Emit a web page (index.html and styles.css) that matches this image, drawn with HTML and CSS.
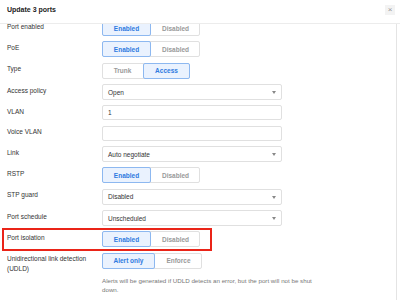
FILE: index.html
```html
<!DOCTYPE html>
<html lang="en">
<head>
    <meta charset="UTF-8">
    <meta name="viewport" content="width=device-width, initial-scale=1.0">
    <title>Update 3 ports</title>
    <link rel="stylesheet" href="styles.css">
</head>
<body>
    <div class="modal">
        <div class="modal-header">
            <span class="modal-title">Update 3 ports</span>
            <span class="close-btn">&times;</span>
        </div>
        <div class="modal-body">
            <div class="form">
                <div class="row">
                    <div class="label">Port enabled</div>
                    <div class="toggle">
                        <span class="seg wide active">Enabled</span>
                        <span class="seg wide">Disabled</span>
                    </div>
                </div>
                <div class="row">
                    <div class="label">PoE</div>
                    <div class="toggle">
                        <span class="seg wide active">Enabled</span>
                        <span class="seg wide">Disabled</span>
                    </div>
                </div>
                <div class="row">
                    <div class="label">Type</div>
                    <div class="toggle">
                        <span class="seg trunk">Trunk</span>
                        <span class="seg access active">Access</span>
                    </div>
                </div>
                <div class="row">
                    <div class="label">Access policy</div>
                    <div class="select">Open<span class="caret"></span></div>
                </div>
                <div class="row">
                    <div class="label">VLAN</div>
                    <div class="input">1</div>
                </div>
                <div class="row">
                    <div class="label">Voice VLAN</div>
                    <div class="input"></div>
                </div>
                <div class="row">
                    <div class="label">Link</div>
                    <div class="select">Auto negotiate<span class="caret"></span></div>
                </div>
                <div class="row">
                    <div class="label">RSTP</div>
                    <div class="toggle">
                        <span class="seg wide active">Enabled</span>
                        <span class="seg wide">Disabled</span>
                    </div>
                </div>
                <div class="row">
                    <div class="label">STP guard</div>
                    <div class="select">Disabled<span class="caret"></span></div>
                </div>
                <div class="row">
                    <div class="label">Port schedule</div>
                    <div class="select">Unscheduled<span class="caret"></span></div>
                </div>
                <div class="row highlight">
                    <div class="label">Port isolation</div>
                    <div class="toggle">
                        <span class="seg wide active">Enabled</span>
                        <span class="seg wide">Disabled</span>
                    </div>
                </div>
                <div class="row">
                    <div class="label">Unidirectional link detection (UDLD)</div>
                    <div class="control">
                        <div class="toggle">
                            <span class="seg alert active">Alert only</span>
                            <span class="seg enforce">Enforce</span>
                        </div>
                        <p class="help">Alerts will be generated if UDLD detects an error, but the port will not be shut down.</p>
                    </div>
                </div>
            </div>
        </div>
    </div>
</body>
</html>
```

FILE: styles.css
```css
html, body {
    margin: 0;
    height: 100%;
    background-color: #fff;
}
body {
    font-family: "Liberation Sans", Arial, sans-serif;
    color: #333;
    overflow: hidden;
}
.modal {
    width: 400px;
    height: 300px;
    display: flex;
    flex-direction: column;
}
.modal-header {
    height: 23px;
    flex-shrink: 0;
    border-bottom: 1px solid #ececec;
    display: flex;
    justify-content: space-between;
    align-items: center;
    padding: 0 5px 0 7px;
    background-color: #fff;
    position: relative;
    z-index: 1;
}
.modal-title {
    font-size: 7px;
    font-weight: bold;
    color: #222;
    margin-top: -4px;
}
.close-btn {
    width: 10px;
    height: 10px;
    background-color: #f3f3f3;
    color: #999;
    font-size: 8px;
    line-height: 10px;
    text-align: center;
    margin-top: -4px;
}
.modal-body {
    flex: 1;
    overflow: hidden;
    width: 396px;
    border-right: 1px solid #e4e4e4;
}
.form {
    margin-top: -4px;
    padding-left: 7px;
    display: flex;
    flex-direction: column;
    gap: 5.35px;
}
.row {
    display: flex;
    position: relative;
}
.row.highlight::after {
    content: "";
    position: absolute;
    left: -5px;
    top: -3px;
    width: 210px;
    height: 23px;
    border: 2px solid #ea2418;
    box-sizing: border-box;
}
.label {
    width: 95px;
    flex-shrink: 0;
    font-size: 6.5px;
    line-height: 9.5px;
    padding-top: 1.5px;
    color: #333;
}
.toggle {
    display: inline-flex;
    height: 16px;
    box-sizing: border-box;
    border: 1px solid #e0e0e0;
    border-radius: 2px;
    align-self: flex-start;
}
.seg {
    display: flex;
    align-items: center;
    justify-content: center;
    font-size: 6.5px;
    font-weight: bold;
    color: #9a9a9a;
    box-sizing: border-box;
    margin: -1px 0;
}
.seg.active {
    background-color: #eaf2fe;
    border: 1px solid #8db8f0;
    color: #2e7ae0;
    border-radius: 2px;
}
.seg:first-child {
    margin-left: -1px;
}
.seg:last-child {
    margin-right: -1px;
}
.seg.wide { width: 49px; }
.seg.trunk { width: 41px; }
.seg.access { width: 47px; }
.seg.alert { width: 53px; }
.seg.enforce { width: 47px; }
.select, .input {
    width: 180px;
    height: 16px;
    box-sizing: border-box;
    border: 1px solid #e0e0e0;
    border-radius: 2px;
    font-size: 6.5px;
    color: #333;
    padding-left: 5px;
    display: flex;
    align-items: center;
    position: relative;
}
.input {
    height: 15px;
}
.caret {
    position: absolute;
    right: 5px;
    top: 6px;
    width: 0;
    height: 0;
    border-left: 2px solid transparent;
    border-right: 2px solid transparent;
    border-top: 3px solid #888;
}
.control {
    display: flex;
    flex-direction: column;
}
.help {
    margin: 7px 0 0;
    width: 222px;
    font-size: 6.2px;
    line-height: 9px;
    color: #777;
}
```
